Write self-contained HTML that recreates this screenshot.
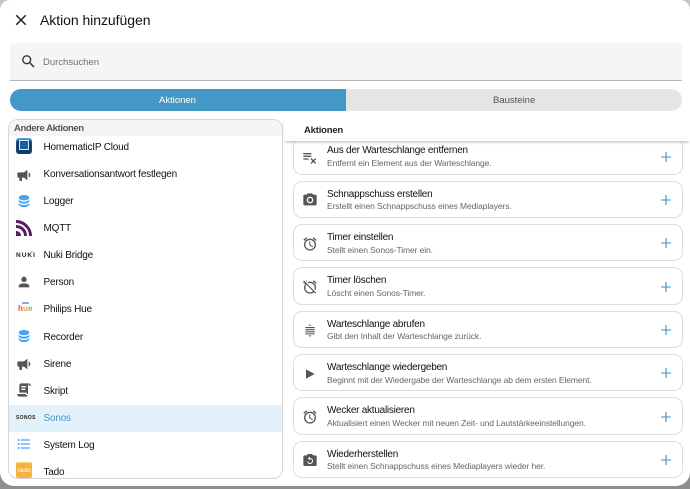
<!DOCTYPE html>
<html lang="de"><head><meta charset="utf-8"><title>Aktion hinzufügen</title>
<style>
html,body{margin:0;padding:0;width:690px;height:489px;overflow:hidden;background:linear-gradient(#c4c4c4 0,#c4c4c4 30px,#8e8e8e 31px);font-family:"Liberation Sans",sans-serif}
div,span,svg{position:absolute;box-sizing:border-box}
#dlg{left:0;top:0;width:690px;height:486px;background:#fff;border-radius:10px 10px 14px 14px;overflow:hidden}
.t{white-space:nowrap}
#list{left:8px;top:119px;width:275px;height:360px;border:1px solid #d6d6d6;border-radius:10px;overflow:hidden;background:#fff}
.r{left:34.5px;font-size:10px;letter-spacing:-.2px;line-height:14px;color:#111;white-space:nowrap}
.i{width:16px;height:16px;left:7px;fill:#555}
.c{left:293px;width:390px;height:37.4px;border:1px solid #dcdcdc;border-radius:9px;background:#fff}
.c b{position:absolute;left:33px;top:6px;font-weight:400;font-size:10px;letter-spacing:-.25px;line-height:13px;color:#111;white-space:nowrap}
.c i{position:absolute;left:33px;top:18.5px;font-style:normal;font-size:8.5px;letter-spacing:-.1px;line-height:12px;color:#666;white-space:nowrap}
.c svg.a{left:8px;top:10.5px;width:16px;height:16px;fill:#555}
.c svg.p{left:365.7px;top:12.3px;width:12px;height:12px;stroke:#3590c4;stroke-width:1.1;fill:none}
</style></head><body>
<div id="dlg">
<svg style="left:12px;top:11px;width:18px;height:18px;fill:#222" viewBox="0 0 24 24"><path d="M19,6.41L17.59,5L12,10.59L6.41,5L5,6.41L10.59,12L5,17.59L6.41,19L12,13.41L17.59,19L19,17.59L13.41,12L19,6.41Z"/></svg>
<div class="t" style="left:40px;top:12px;font-size:14px;letter-spacing:-.05px;line-height:17px;color:#111">Aktion hinzufügen</div>

<div style="left:10px;top:43px;width:672px;height:38px;background:#f5f5f5;border-bottom:1px solid #b4b4b4;border-radius:3px 3px 0 0"></div>
<svg style="left:20px;top:53px;width:17px;height:17px;fill:#333" viewBox="0 0 24 24"><path d="M9.5,3A6.5,6.5 0 0,1 16,9.5C16,11.11 15.41,12.59 14.44,13.73L14.71,14H15.5L20.5,19L19,20.5L14,15.5V14.71L13.73,14.44C12.59,15.41 11.11,16 9.5,16A6.5,6.5 0 0,1 3,9.5A6.5,6.5 0 0,1 9.5,3M9.5,5C7,5 5,7 5,9.5C5,12 7,14 9.5,14C12,14 14,12 14,9.5C14,7 12,5 9.5,5Z"/></svg>
<div class="t" style="left:43px;top:57px;font-size:9.5px;line-height:12px;color:#707070">Durchsuchen</div>

<div style="left:10px;top:89px;width:336px;height:22px;background:#4398c6;border-radius:11px 0 0 11px"></div>
<div style="left:346px;top:89px;width:336px;height:22px;background:#e5e5e5;border-radius:0 11px 11px 0"></div>
<div class="t" style="left:159px;top:95px;font-size:9.5px;line-height:12px;color:#fff">Aktionen</div>
<div class="t" style="left:493px;top:95px;font-size:9.5px;line-height:12px;color:#555">Bausteine</div>

<div class="c" style="top:137.4px"><b>Aus der Warteschlange entfernen</b><i>Entfernt ein Element aus der Warteschlange.</i>
<svg class="a" viewBox="0 0 24 24"><path d="M2,6V8H14V6H2M2,10V12H14V10H2M2,14V16H10V14H2M14.17,13.76L12.76,15.17L15.59,18L12.76,20.83L14.17,22.24L17,19.41L19.83,22.24L21.24,20.83L18.41,18L21.24,15.17L19.83,13.76L17,16.59L14.17,13.76Z"/></svg>
<svg class="p" viewBox="0 0 12 12"><path d="M6 1V11M1 6H11"/></svg></div>
<div class="c" style="top:180.6px"><b>Schnappschuss erstellen</b><i>Erstellt einen Schnappschuss eines Mediaplayers.</i>
<svg class="a" viewBox="0 0 24 24"><path d="M4,4H7L9,2H15L17,4H20A2,2 0 0,1 22,6V18A2,2 0 0,1 20,20H4A2,2 0 0,1 2,18V6A2,2 0 0,1 4,4M12,7A5,5 0 0,0 7,12A5,5 0 0,0 12,17A5,5 0 0,0 17,12A5,5 0 0,0 12,7M12,9A3,3 0 0,1 15,12A3,3 0 0,1 12,15A3,3 0 0,1 9,12A3,3 0 0,1 12,9Z"/></svg>
<svg class="p" viewBox="0 0 12 12"><path d="M6 1V11M1 6H11"/></svg></div>
<div class="c" style="top:224px"><b>Timer einstellen</b><i>Stellt einen Sonos-Timer ein.</i>
<svg class="a" viewBox="0 0 24 24"><path d="M12,20A7,7 0 0,1 5,13A7,7 0 0,1 12,6A7,7 0 0,1 19,13A7,7 0 0,1 12,20M12,4A9,9 0 0,0 3,13A9,9 0 0,0 12,22A9,9 0 0,0 21,13A9,9 0 0,0 12,4M12.5,8H11V14L15.75,16.85L16.5,15.62L12.5,13.25V8M7.88,3.39L6.6,1.86L2,5.71L3.29,7.24L7.88,3.39M22,5.72L17.4,1.86L16.11,3.39L20.71,7.25L22,5.72Z"/></svg>
<svg class="p" viewBox="0 0 12 12"><path d="M6 1V11M1 6H11"/></svg></div>
<div class="c" style="top:267.3px"><b>Timer löschen</b><i>Löscht einen Sonos-Timer.</i>
<svg class="a" viewBox="0 0 24 24"><path d="M8,3.28L6.6,1.86L5.74,2.57L7.16,4M16.47,18.39C15.26,19.39 13.7,20 12,20A7,7 0 0,1 5,13C5,11.3 5.61,9.74 6.61,8.53M2.92,2.29L1.65,3.57L3,4.9L1.87,5.83L3.29,7.25L4.4,6.31L5.2,7.11C3.83,8.69 3,10.75 3,13A9,9 0 0,0 12,22C14.25,22 16.31,21.17 17.89,19.8L20.09,22L21.36,20.73L3.89,3.27L2.92,2.29M22,5.72L17.4,1.86L16.11,3.39L20.71,7.25L22,5.72M12,6A7,7 0 0,1 19,13C19,13.84 18.84,14.65 18.57,15.4L20.09,16.92C20.67,15.73 21,14.41 21,13A9,9 0 0,0 12,4C10.59,4 9.27,4.33 8.08,4.91L9.6,6.43C10.35,6.16 11.16,6 12,6Z"/></svg>
<svg class="p" viewBox="0 0 12 12"><path d="M6 1V11M1 6H11"/></svg></div>
<div class="c" style="top:310.7px"><b>Warteschlange abrufen</b><i>Gibt den Inhalt der Warteschlange zurück.</i>
<svg class="a" viewBox="0 0 24 24"><path d="M5,7.5H19V9.2H5V7.5M5,10.7H19V12.4H5V10.7M5,13.9H19V15.6H5V13.9M5,17H19V18.5H5V17M10,5.5L12,3L14,5.5H10M10,20H14L12,22.5L10,20Z"/></svg>
<svg class="p" viewBox="0 0 12 12"><path d="M6 1V11M1 6H11"/></svg></div>
<div class="c" style="top:354px"><b>Warteschlange wiedergeben</b><i>Beginnt mit der Wiedergabe der Warteschlange ab dem ersten Element.</i>
<svg class="a" viewBox="0 0 24 24"><path d="M6,5V19L19,12L6,5Z"/></svg>
<svg class="p" viewBox="0 0 12 12"><path d="M6 1V11M1 6H11"/></svg></div>
<div class="c" style="top:397.4px"><b>Wecker aktualisieren</b><i>Aktualisiert einen Wecker mit neuen Zeit- und Lautstärkeeinstellungen.</i>
<svg class="a" viewBox="0 0 24 24"><path d="M12,20A7,7 0 0,1 5,13A7,7 0 0,1 12,6A7,7 0 0,1 19,13A7,7 0 0,1 12,20M12,4A9,9 0 0,0 3,13A9,9 0 0,0 12,22A9,9 0 0,0 21,13A9,9 0 0,0 12,4M12.5,8H11V14L15.75,16.85L16.5,15.62L12.5,13.25V8M7.88,3.39L6.6,1.86L2,5.71L3.29,7.24L7.88,3.39M22,5.72L17.4,1.86L16.11,3.39L20.71,7.25L22,5.72Z"/></svg>
<svg class="p" viewBox="0 0 12 12"><path d="M6 1V11M1 6H11"/></svg></div>
<div class="c" style="top:440.7px"><b>Wiederherstellen</b><i>Stellt einen Schnappschuss eines Mediaplayers wieder her.</i>
<svg class="a" viewBox="0 0 24 24"><path d="M4,5H7L9,3H15L17,5H20A2,2 0 0,1 22,7V19A2,2 0 0,1 20,21H4A2,2 0 0,1 2,19V7A2,2 0 0,1 4,5Z"/><path d="M12,9A4.5,4.5 0 1,1 7.6,14.5H9.2A3,3 0 1,0 12,10.5V12.5L8.8,9.8L12,7Z" fill="#fff"/></svg>
<svg class="p" viewBox="0 0 12 12"><path d="M6 1V11M1 6H11"/></svg></div>

<div style="left:284px;top:119px;width:406px;height:22px;background:#fff;box-shadow:0 2px 3px -1px rgba(0,0,0,.3)"></div>
<div class="t" style="left:304px;top:124px;font-size:9.5px;letter-spacing:-.2px;line-height:13px;font-weight:700;color:#222">Aktionen</div>

<div id="list">
<div style="left:0;top:0;width:275px;height:16px;background:#f5f5f5"></div>
<div class="t" style="left:5px;top:2.5px;font-size:9.5px;letter-spacing:-.4px;line-height:12px;font-weight:700;color:#555">Andere Aktionen</div>

<div style="left:7px;top:17.5px;width:16px;height:16px;background:#10386a;border-radius:3px;box-shadow:inset 0 2px 1px #4aa6e0"></div>
<div style="left:10px;top:20px;width:10px;height:10px;border:1.4px solid #dbe8f5;background:#1f5a99"></div>
<div class="r" style="top:20.5px">HomematicIP Cloud</div>

<svg class="i" style="top:47px" viewBox="0 0 24 24"><path d="M12,8H4A2,2 0 0,0 2,10V14A2,2 0 0,0 4,16H5V20A1,1 0 0,0 6,21H8A1,1 0 0,0 9,20V16H12L17,20V4L12,8M21.5,12C21.5,13.71 20.54,15.26 19,16V8C20.53,8.75 21.5,10.3 21.5,12Z"/></svg>
<div class="r" style="top:47.5px">Konversationsantwort festlegen</div>

<svg class="i" style="top:73px;fill:#45a4f5" viewBox="0 0 24 24"><path d="M12,3C7.58,3 4,4.79 4,7C4,9.21 7.58,11 12,11C16.42,11 20,9.21 20,7C20,4.79 16.42,3 12,3M4,9V12C4,14.21 7.58,16 12,16C16.42,16 20,14.21 20,12V9C20,11.21 16.42,13 12,13C7.58,13 4,11.21 4,9M4,14V17C4,19.21 7.58,21 12,21C16.42,21 20,19.21 20,17V14C20,16.21 16.42,18 12,18C7.58,18 4,16.21 4,14Z"/></svg>
<div class="r" style="top:75px">Logger</div>

<svg class="i" style="top:100px;fill:none;stroke:#5a1a64" viewBox="0 0 16 16"><path d="M0 1.5C8 1.5 14.5 8 14.5 16M0 6.5C5.5 6.5 9.5 10.5 9.5 16" stroke-width="3"/><path d="M0 11C3 11 5 13 5 16H0Z" fill="#5a1a64" stroke="none"/></svg>
<div class="r" style="top:102px">MQTT</div>

<div class="t" style="left:7px;top:130.5px;font-size:6.5px;line-height:10px;font-weight:700;letter-spacing:1px;color:#222">NUKI</div>
<div style="left:22px;top:130.5px;width:1.5px;height:1.5px;background:#e8c050"></div>
<div class="r" style="top:129px">Nuki Bridge</div>

<svg class="i" style="top:154px" viewBox="0 0 24 24"><path d="M12,4A4,4 0 0,1 16,8A4,4 0 0,1 12,12A4,4 0 0,1 8,8A4,4 0 0,1 12,4M12,14C16.42,14 20,15.79 20,18V20H4V18C4,15.79 7.58,14 12,14Z"/></svg>
<div class="r" style="top:156px">Person</div>

<div style="left:13px;top:182px;width:7px;height:1.5px;background:#8ea6dc"></div>
<div class="t" style="left:9px;top:184px;font-size:8px;line-height:10px;letter-spacing:.1px;font-weight:700"><span style="position:static;color:#e0504a">h</span><span style="position:static;color:#eba14a">u</span><span style="position:static;color:#7fb27f">e</span></div>
<div class="r" style="top:183px">Philips Hue</div>

<svg class="i" style="top:208px;fill:#45a4f5" viewBox="0 0 24 24"><path d="M12,3C7.58,3 4,4.79 4,7C4,9.21 7.58,11 12,11C16.42,11 20,9.21 20,7C20,4.79 16.42,3 12,3M4,9V12C4,14.21 7.58,16 12,16C16.42,16 20,14.21 20,12V9C20,11.21 16.42,13 12,13C7.58,13 4,11.21 4,9M4,14V17C4,19.21 7.58,21 12,21C16.42,21 20,19.21 20,17V14C20,16.21 16.42,18 12,18C7.58,18 4,16.21 4,14Z"/></svg>
<div class="r" style="top:210.5px">Recorder</div>

<svg class="i" style="top:236px" viewBox="0 0 24 24"><path d="M12,8H4A2,2 0 0,0 2,10V14A2,2 0 0,0 4,16H5V20A1,1 0 0,0 6,21H8A1,1 0 0,0 9,20V16H12L17,20V4L12,8M21.5,12C21.5,13.71 20.54,15.26 19,16V8C20.53,8.75 21.5,10.3 21.5,12Z"/></svg>
<div class="r" style="top:237.5px">Sirene</div>

<svg class="i" style="top:262px" viewBox="0 0 24 24"><path d="M17.8,20C17.4,21.2 16.3,22 15,22H5C3.3,22 2,20.7 2,19V18H5L14.2,18C14.6,19.2 15.7,20 17,20H17.8M19,2C20.7,2 22,3.3 22,5V6H20V5C20,4.4 19.6,4 19,4C18.4,4 18,4.4 18,5V18H17C16.4,18 16,17.6 16,17V16H5V5C5,3.3 6.3,2 8,2H19M8,6V8H15V6H8M8,10V12H14V10H8Z"/></svg>
<div class="r" style="top:264.5px">Skript</div>

<div style="left:0;top:285px;width:275px;height:27px;background:#e3f1fa"></div>
<div class="t" style="left:7px;top:292.5px;font-size:5px;line-height:10px;font-weight:700;letter-spacing:.35px;color:#222">SONOS</div>
<div class="r" style="top:291.5px;color:#4398c6">Sonos</div>

<svg class="i" style="top:316px;fill:#45a4f5" viewBox="0 0 24 24"><path d="M7,5H21V7H7V5M7,13V11H21V13H7M4,4.5A1.5,1.5 0 0,1 5.5,6A1.5,1.5 0 0,1 4,7.5A1.5,1.5 0 0,1 2.5,6A1.5,1.5 0 0,1 4,4.5M4,10.5A1.5,1.5 0 0,1 5.5,12A1.5,1.5 0 0,1 4,13.5A1.5,1.5 0 0,1 2.5,12A1.5,1.5 0 0,1 4,10.5M7,19V17H21V19H7M4,16.5A1.5,1.5 0 0,1 5.5,18A1.5,1.5 0 0,1 4,19.5A1.5,1.5 0 0,1 2.5,18A1.5,1.5 0 0,1 4,16.5Z"/></svg>
<div class="r" style="top:318.5px">System Log</div>

<div style="left:7px;top:342px;width:16px;height:16px;background:#f5b23c;border-radius:2px;box-shadow:inset 0 1px 0 #f8d880"></div>
<div class="t" style="left:9px;top:346px;font-size:6.5px;line-height:10px;color:#fff">tado</div>
<div class="r" style="top:345.5px">Tado</div>
</div>
</div>
</body></html>
